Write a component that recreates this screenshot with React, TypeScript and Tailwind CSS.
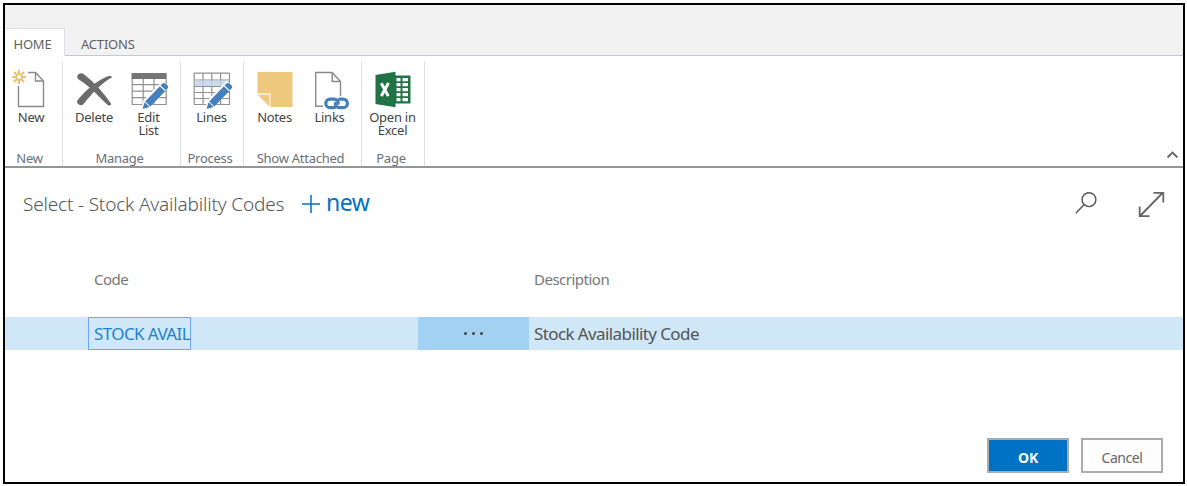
import type { ReactNode } from "react";

function NewIcon() {
  return (
    <svg viewBox="11 68 40 40" className="h-10 w-10 shrink-0" fill="none">
      <path d="M28 72.5h7.500l8 8.5v25.5h-25V86M35.500 72.500V81h8" stroke="#8a8a8a" strokeWidth="1.4" />
      <path
        d="M19 70v4M19 80v4M12 77h4M22 77h4M14 72l3 3M21 79l3 3M14 82l3-3M21 75l3-3"
        stroke="#edc06a"
        strokeWidth="2"
      />
      <circle cx="19" cy="77" r="2.8" stroke="#edc06a" strokeWidth="1.5" />
    </svg>
  );
}

function DeleteIcon() {
  return (
    <svg viewBox="74 68 40 40" className="h-10 w-10 shrink-0" fill="#6b6b6b">
      <path d="M77.200 76.500c0-2.600 4-4.300 6.800-2.300C94 82 103 92 111.500 104.300c-1 1.300-2.500 1.500-3.700.6C100 98.500 91 86.500 79 79.700c-1.200-.7-1.800-1.900-1.800-3.200z" />
      <path d="M112 77.300c-.5-1.700-2.500-1.600-4-1C97.500 80 85 90.500 77.200 100.800c-1 2.900 3.300 5.700 6 3.600C91 95 99.500 84.500 112 77.300z" />
    </svg>
  );
}

function Pencil({ x }: { x: number }) {
  return (
    <g transform={`translate(${x} 0)`}>
      <path d="M140.500 109l2.500-8.800 19-19.200 7 5.500-19.500 20.500z" fill="#fff" />
      <path d="M144.700 101.600l14.600-15.300 5.300 4.900-14.700 15.300z" fill="#4580bd" />
      <path d="M160.100 85.500l1.800-1.900c1-.9 2.300-.8 3.300.1l1.600 1.500c1 1 1.100 2.200.2 3.200l-1.700 1.900z" fill="#4580bd" />
      <path d="M144.100 102.300l5.100 4.700-7.200 2z" fill="#4580bd" />
    </g>
  );
}

function EditListIcon() {
  return (
    <svg viewBox="128.500 68 40 41" className="h-[41px] w-10 shrink-0" fill="none">
      <path
        d="M131.700 79v25.500h34V79M131.700 84.700h34M131.700 91.200h34M131.700 97.700h34M142.700 79v25.500M153.500 79v25.500"
        stroke="#929292"
        strokeWidth="1.200"
      />
      <path d="M131 73h35.200v6H131z" fill="#757575" />
      <Pencil x={0} />
    </svg>
  );
}

function LinesIcon() {
  return (
    <svg viewBox="192 68 40 41" className="h-[41px] w-10 shrink-0" fill="none">
      <path
        d="M194.200 73.200h35.300v31.300h-35.300zM194.200 80h35.300M194.200 86.500h35.300M194.200 92.500h35.300M194.200 98.500h35.300M203 73v31.500M211.800 73v31.500M220.600 73v31.500"
        stroke="#929292"
        strokeWidth="1.200"
      />
      <path d="M194.800 80.600h34v5.400h-34z" fill="#bfd5ea" fillOpacity=".85" />
      <Pencil x={64.500} />
    </svg>
  );
}

function NotesIcon() {
  return (
    <svg viewBox="255 68 40 40" className="h-10 w-10 shrink-0">
      <path d="M257.500 72h35v35h-22V93.500h-13z" fill="#eec87d" />
      <path d="M257.800 94.800h11.700v11.700z" fill="#eec87d" />
    </svg>
  );
}

function LinksIcon() {
  return (
    <svg viewBox="309.500 68 41 42" className="h-[42px] w-[41px] shrink-0" fill="none">
      <path d="M323.500 106.300h-7.300V72.500h16.500l8.300 9V96M332.700 72.500v9h8.300" stroke="#8a8a8a" strokeWidth="1.400" />
      <g stroke="#4580bd" strokeWidth="3.200" strokeLinecap="round">
        <path d="M335 107.600h-4.500a4.200 4.200 0 0 1 0-8.400h4c2.900 0 4.600 2 4 4.200" />
        <path d="M340 99.200h3.700a4.200 4.200 0 0 1 0 8.400H340c-2.900 0-4.600-2-4-4.200" />
      </g>
    </svg>
  );
}

function ExcelIcon() {
  return (
    <svg viewBox="373 68 40 40" className="h-10 w-10 shrink-0">
      <path d="M394 75.500h16.500v28H394z" fill="#217346" />
      <path
        d="M396.500 78h4v3.200h-4zM402.500 78h5.500v3.200h-5.500zM396.500 83h4v3.200h-4zM402.500 83h5.500v3.200h-5.500zM396.500 88h4v3.200h-4zM402.500 88h5.500v3.200h-5.500zM396.500 93h4v3.200h-4zM402.500 93h5.500v3.200h-5.500zM396.500 98h4v3.200h-4zM402.500 98h5.500v3.200h-5.500z"
        fill="#fff"
      />
      <path d="M375.500 75l20-3.200v35.400l-20-3.200z" fill="#217346" />
      <path d="M381.300 83.300l7 12.800M388.500 83l-7.200 13" stroke="#fff" strokeWidth="3" />
    </svg>
  );
}

function RibbonItem({ icon, width, children }: { icon: ReactNode; width: string; children: ReactNode }) {
  return (
    <button className={`flex flex-col items-center text-[13px] leading-[13px] tracking-[-0.25px] text-[#444] ${width}`}>
      <span className="flex h-[43px] justify-center">{icon}</span>
      <span className="whitespace-nowrap text-center">{children}</span>
    </button>
  );
}

function RibbonGroup({
  caption,
  className,
  captionClass,
  children,
}: {
  caption: string;
  className: string;
  captionClass: string;
  children: ReactNode;
}) {
  return (
    <section className={`flex shrink-0 flex-col border-r border-[#dfe1e4] pt-[7px] ${className}`}>
      <div className="flex h-[82px]">{children}</div>
      <div className={`whitespace-nowrap text-center text-[13px] leading-4 tracking-[-0.25px] text-[#6a7079] ${captionClass}`}>
        {caption}
      </div>
    </section>
  );
}

export default function App() {
  return (
    <div className="h-[486px] w-[1187px] bg-white pl-[3px] pt-[3px] font-['Noto_Sans','Open_Sans',sans-serif]">
      <div className="flex h-[481px] w-[1182px] flex-col border-2 border-black">
        <header className="flex h-[51px] shrink-0 items-end bg-[#f2f2f2]">
          <div className="flex h-7 w-[60px] items-center justify-center border-r border-t border-[#dcdfe3] bg-white pr-1 pt-1 text-[13px] tracking-[-0.2px] text-[#5f5f5f]">
            HOME
          </div>
          <div className="flex h-7 flex-1 items-center border-b border-[#bfc8d5] pl-4 pt-[6px] text-[13px] tracking-[-0.2px] text-[#5f5f5f]">
            ACTIONS
          </div>
        </header>

        <div className="flex h-[112px] shrink-0 border-b-2 border-[#939598] pt-[5px]">
          <RibbonGroup caption="New" className="w-[58px]" captionClass="pr-2">
            <RibbonItem icon={<NewIcon />} width="w-[52px]">New</RibbonItem>
          </RibbonGroup>
          <RibbonGroup caption="Manage" className="w-[118px]" captionClass="pr-1">
            <div className="flex pl-1">
              <RibbonItem icon={<DeleteIcon />} width="w-[54px]">Delete</RibbonItem>
              <RibbonItem icon={<EditListIcon />} width="w-[55px]">Edit<br />List</RibbonItem>
            </div>
          </RibbonGroup>
          <RibbonGroup caption="Process" className="w-[63px]" captionClass="pr-1">
            <RibbonItem icon={<LinesIcon />} width="w-[61px]">Lines</RibbonItem>
          </RibbonGroup>
          <RibbonGroup caption="Show Attached" className="w-[118px]" captionClass="pr-1">
            <div className="flex pl-[3px]">
              <RibbonItem icon={<NotesIcon />} width="w-[55px]">Notes</RibbonItem>
              <RibbonItem icon={<LinksIcon />} width="w-[55px]">Links</RibbonItem>
            </div>
          </RibbonGroup>
          <RibbonGroup caption="Page" className="w-[63px]" captionClass="pr-1">
            <RibbonItem icon={<ExcelIcon />} width="w-[61px]">Open in<br />Excel</RibbonItem>
          </RibbonGroup>
          <div className="flex flex-1 items-end justify-end pb-[7px] pr-1">
            <svg viewBox="0 0 13 9" className="h-[9px] w-[13px]" fill="none">
              <path d="M1.500 7.500l5-5 5 5" stroke="#666" strokeWidth="1.800" />
            </svg>
          </div>
        </div>

        <div className="flex h-[72px] shrink-0 items-center pl-[18px] pr-[18px]">
          <h1 className="w-[279px] whitespace-nowrap text-[19px] font-light tracking-[-0.18px] text-[#555]">
            Select - Stock Availability Codes
          </h1>
          <button className="flex items-center gap-[6px] text-[23px] leading-7 tracking-[-0.5px] text-[#0072c6]">
            <svg viewBox="0 0 18 18" className="h-[18px] w-[18px]" fill="none">
              <path d="M9 0v18M0 9h18" stroke="#0072c6" strokeWidth="1.500" />
            </svg>
            <span className="pb-1">new</span>
          </button>
          <div className="flex flex-1 items-center justify-end gap-10">
            <svg viewBox="0 0 24 24" className="h-6 w-6" fill="none" stroke="#555" strokeWidth="1.400">
              <circle cx="16" cy="7.700" r="6.900" />
              <path d="M11 12.700L2.800 21.200" />
            </svg>
            <svg viewBox="0 0 28 28" className="h-7 w-7" fill="none" stroke="#666" strokeWidth="1.800">
              <path d="M3.500 25.500l22-22.500M16.500 2.800h9.800v9.700M2.700 16.500v9.700h9.800" />
            </svg>
          </div>
        </div>

        <div className="grid h-[77px] shrink-0 grid-cols-[440px_1fr] pl-[89px] pt-[29px] text-[15px] leading-5 tracking-[-0.5px] text-[#777]">
          <span>Code</span>
          <span>Description</span>
        </div>
        <div className="flex h-[33px] shrink-0 items-stretch bg-[#d0e7f8] text-[17px] tracking-[-0.6px] text-[#555]">
          <div className="flex w-[413px] pl-[83px]">
            <div className="flex w-[103px] items-center whitespace-nowrap border border-[#6ea6fb] pl-[5px] text-[#1b82cf]">
              STOCK AVAIL
            </div>
          </div>
          <div className="flex w-[111px] items-center justify-center gap-[5px] bg-[#a3d1f1]">
            <span className="h-[3px] w-[3px] rounded-full bg-[#444]" />
            <span className="h-[3px] w-[3px] rounded-full bg-[#444]" />
            <span className="h-[3px] w-[3px] rounded-full bg-[#444]" />
          </div>
          <div className="flex items-center pl-[5px]">Stock Availability Code</div>
        </div>

        <footer className="flex flex-1 items-end justify-end gap-3 pb-[9px] pr-5">
          <button className="h-[35px] w-[82px] border-2 border-[#ababab] bg-[#0072c6] pt-[3px] text-[14px] font-bold tracking-[-0.3px] text-white">
            OK
          </button>
          <button className="h-[35px] w-[82px] border-2 border-[#ababab] bg-[#fdfdfd] pt-[3px] text-[14px] tracking-[-0.45px] text-[#666]">
            Cancel
          </button>
        </footer>
      </div>
    </div>
  );
}
